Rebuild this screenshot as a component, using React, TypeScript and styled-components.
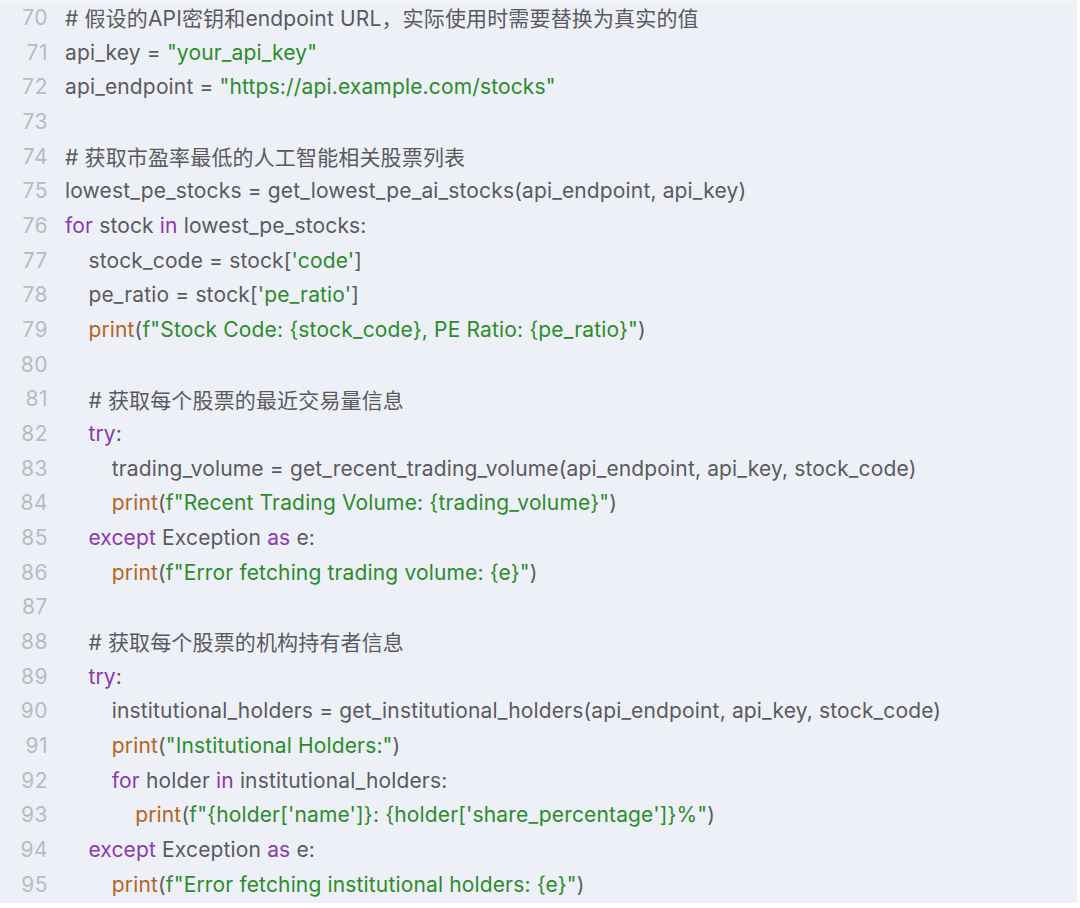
import React from "react";
import styled, { createGlobalStyle } from "styled-components";

const Global = createGlobalStyle`
  html, body { margin: 0; padding: 0; background: #ffffff; }
  body { font-family: Inter, "Noto Sans CJK SC", sans-serif; }
`;

type Kind = "t" | "k" | "f" | "s";
type Tok = [Kind, string];
type Line = { n: number; indent: number; toks: Tok[] };

const L = (n: number, indent: number, ...toks: Tok[]): Line => ({ n, indent, toks });

const lines: Line[] = [
  L(70, 0, ["t", "# 假设的API密钥和endpoint URL，实际使用时需要替换为真实的值"]),
  L(71, 0, ["t", "api_key = "], ["s", '"your_api_key"']),
  L(72, 0, ["t", "api_endpoint = "], ["s", '"https://api.example.com/stocks"']),
  L(73, 0),
  L(74, 0, ["t", "# 获取市盈率最低的人工智能相关股票列表"]),
  L(75, 0, ["t", "lowest_pe_stocks = get_lowest_pe_ai_stocks(api_endpoint, api_key)"]),
  L(76, 0, ["k", "for"], ["t", " stock "], ["k", "in"], ["t", " lowest_pe_stocks:"]),
  L(77, 1, ["t", "stock_code = stock["], ["s", "'code'"], ["t", "]"]),
  L(78, 1, ["t", "pe_ratio = stock["], ["s", "'pe_ratio'"], ["t", "]"]),
  L(79, 1, ["f", "print"], ["t", "("], ["s", 'f"Stock Code: {stock_code}, PE Ratio: {pe_ratio}"'], ["t", ")"]),
  L(80, 0),
  L(81, 1, ["t", "# 获取每个股票的最近交易量信息"]),
  L(82, 1, ["k", "try"], ["t", ":"]),
  L(83, 2, ["t", "trading_volume = get_recent_trading_volume(api_endpoint, api_key, stock_code)"]),
  L(84, 2, ["f", "print"], ["t", "("], ["s", 'f"Recent Trading Volume: {trading_volume}"'], ["t", ")"]),
  L(85, 1, ["k", "except"], ["t", " Exception "], ["k", "as"], ["t", " e:"]),
  L(86, 2, ["f", "print"], ["t", "("], ["s", 'f"Error fetching trading volume: {e}"'], ["t", ")"]),
  L(87, 0),
  L(88, 1, ["t", "# 获取每个股票的机构持有者信息"]),
  L(89, 1, ["k", "try"], ["t", ":"]),
  L(90, 2, ["t", "institutional_holders = get_institutional_holders(api_endpoint, api_key, stock_code)"]),
  L(91, 2, ["f", "print"], ["t", "("], ["s", '"Institutional Holders:"'], ["t", ")"]),
  L(92, 2, ["k", "for"], ["t", " holder "], ["k", "in"], ["t", " institutional_holders:"]),
  L(93, 3, ["f", "print"], ["t", "("], ["s", "f\"{holder['name']}: {holder['share_percentage']}%\""], ["t", ")"]),
  L(94, 1, ["k", "except"], ["t", " Exception "], ["k", "as"], ["t", " e:"]),
  L(95, 2, ["f", "print"], ["t", "("], ["s", 'f"Error fetching institutional holders: {e}"'], ["t", ")"]),
];

const Panel = styled.div`
  width: 1077px;
  height: 903px;
  background: linear-gradient(#f2f3f7 0 3px, #eef0f7 3px);
  display: flex;
  flex-direction: column;
`;

const Row = styled.div`
  display: flex;
  align-items: center;
  height: 34.68px;
  font-size: 21px;
  letter-spacing: 0.15px;
  white-space: pre;
`;

const Num = styled.span`
  width: 48px;
  text-align: right;
  color: #b9bbc2;
  flex: none;
  letter-spacing: 0.5px;
`;

const Code = styled.span<{ $indent: number }>`
  margin-left: 17px;
  padding-left: ${(p) => p.$indent * 23.4}px;
  color: #5a5a5e;
`;

const colors: Record<Kind, string> = {
  t: "#5a5a5e",
  k: "#8a39ad",
  f: "#b5651d",
  s: "#2b8c2b",
};

const Tk = styled.span<{ $kind: Kind }>`
  color: ${(p) => colors[p.$kind]};
`;

export default function App() {
  return (
    <>
      <Global />
      <Panel>
        {lines.map((ln) => (
          <Row key={ln.n}>
            <Num>{ln.n}</Num>
            <Code $indent={ln.indent}>
              {ln.toks.map((t, i) => (
                <Tk key={i} $kind={t[0]}>
                  {t[1]}
                </Tk>
              ))}
            </Code>
          </Row>
        ))}
      </Panel>
    </>
  );
}
